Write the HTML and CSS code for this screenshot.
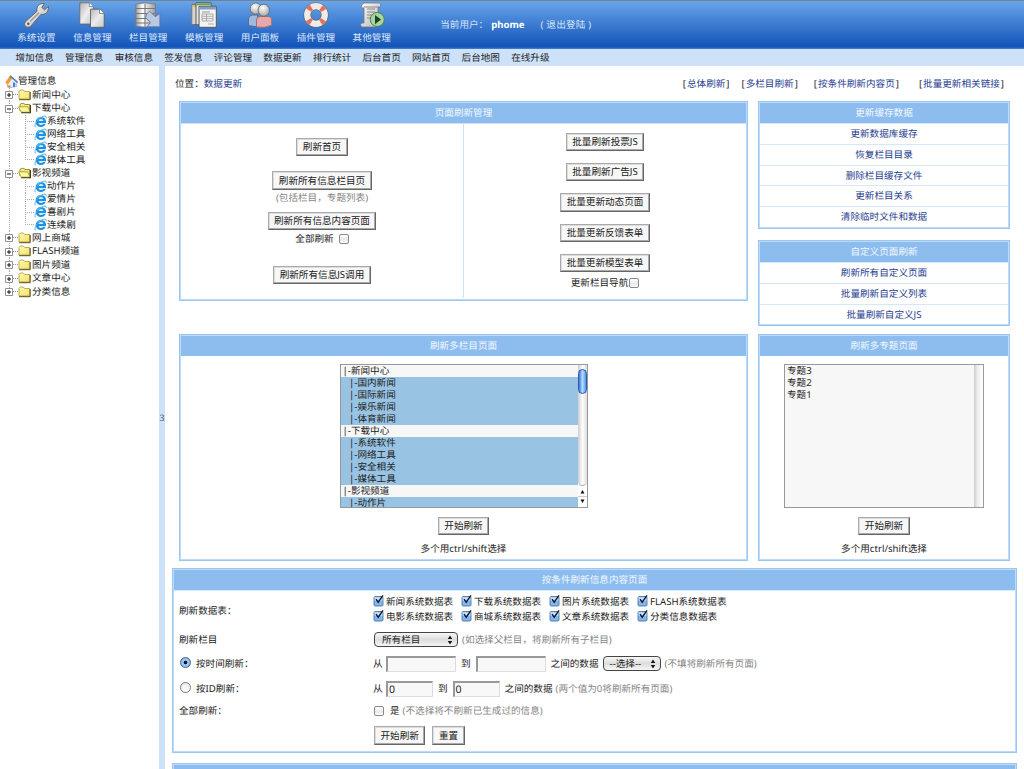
FILE: index.html
```html
<!DOCTYPE html>
<html lang="zh-CN">
<head>
<meta charset="utf-8">
<title>数据更新</title>
<link rel="stylesheet" href="styles.css">
</head>
<body>
<svg class="defs" width="0" height="0">
  <defs>
    <linearGradient id="metal" x1="0" y1="0" x2="1" y2="1"><stop offset="0" stop-color="#fff"/><stop offset="1" stop-color="#b4b4b4"/></linearGradient>
    <linearGradient id="paper" x1="0" y1="0" x2="1" y2="1"><stop offset="0" stop-color="#b5b6b8"/><stop offset=".5" stop-color="#ededed"/><stop offset="1" stop-color="#c4c4c4"/></linearGradient>
    <linearGradient id="cyl" x1="0" x2="1"><stop offset="0" stop-color="#999"/><stop offset=".35" stop-color="#fff"/><stop offset="1" stop-color="#999"/></linearGradient>
    <radialGradient id="head" cx=".4" cy=".3" r=".7"><stop offset="0" stop-color="#fff"/><stop offset="1" stop-color="#aaa"/></radialGradient>
    <linearGradient id="fold" x1="0" y1="0" x2="1" y2="1"><stop offset="0" stop-color="#fffbb8"/><stop offset="1" stop-color="#f5df66"/></linearGradient>
    <symbol id="folder" viewBox="0 0 13 12"><path d="M1 10V2.5L2.3 1h3L6.6 2.5h5V10z" fill="url(#fold)" stroke="#a99a35" stroke-width=".8"/><path d="M1.2 10.7h11V3" fill="none" stroke="#55501c" stroke-width="1"/></symbol>
    <symbol id="open" viewBox="0 0 13 12"><path d="M2 9V2.5L3.2 1.4h2.6l1.2 1.1h4.8V10" fill="#f6e882" stroke="#8e8226" stroke-width=".9"/><path d="M.6 4.8h9l2.4 5.4H3.2z" fill="#fff9a2" stroke="#a59422" stroke-width=".8"/><path d="M3.2 10.8h9.2V3" fill="none" stroke="#39350f" stroke-width="1.1"/></symbol>
    <symbol id="ie" viewBox="0 0 13 13"><circle cx="6.9" cy="6.9" r="5.2" fill="#1f8fe0"/><path d="M4.6 6.1a2.4 2 0 0 1 4.8 0z" fill="#cfeeff"/><path d="M4.5 7.9h7.9v1.2H9.3c-1.2 1.6-4.2 1.3-4.8-1.2z" fill="#cfeeff"/><path d="M2.6 5C4 2.6 6.6 2 8.6 2.8" fill="none" stroke="#6cc9fa" stroke-width="1"/><path d="M1.8 12.2C-.4 11.4 2.1 6.4 5.8 3.4S12.8.2 12.2 3.2" fill="none" stroke="#45aeee" stroke-width="1"/></symbol>
    <symbol id="plus" viewBox="0 0 13 13"><path d="M8 6.5h5" stroke="#999" stroke-dasharray="1 1"/><path d="M.5 3.5h7v7h-7z" fill="#fff" stroke="#909090"/><path d="M2 7h4M4 5v4" stroke="#111" stroke-width="1"/></symbol>
    <symbol id="minus" viewBox="0 0 13 13"><path d="M8 6.5h5" stroke="#999" stroke-dasharray="1 1"/><path d="M.5 3.5h7v7h-7z" fill="#fff" stroke="#909090"/><path d="M2 7h4" stroke="#111" stroke-width="1"/></symbol>
    <symbol id="chk" viewBox="0 0 12 12"><rect x="1" y="1.5" width="9" height="9.5" rx="1.2" fill="#7fb7f2" stroke="#52749e" stroke-width=".9"/><path d="M1.6 2.2h7.8v3.5H1.6z" fill="#c8e0fa"/><path d="M3 4.2 5.2 7.2 10 .4" fill="none" stroke="#10182c" stroke-width="1.4"/></symbol>
    <symbol id="arrows" viewBox="0 0 6 10"><path d="M3 .6 5.2 4H.8zM3 9.4.8 6h4.4z" fill="#111"/></symbol>
  </defs>
</svg>

<header class="top">
  <nav class="tools">
    <a class="tool"><svg viewBox="0 0 26 26"><path d="M2.4 19.8 14 9.2C12.9 4.6 16.6.5 21.6 1.6L18.8 5.5l2.7 2.3 4-3.4c.4 5.4-3 8.6-7.6 8L7.6 24.4c-3.6 2.4-7.8-1-5.2-4.6z" fill="url(#metal)" stroke="#66645c" stroke-width="1"/><circle cx="5.3" cy="21.8" r="1.2" fill="#555"/><path d="M7 19.5 16 10.8" stroke="#999" stroke-width="1.3"/></svg><span>系统设置</span></a>
    <a class="tool"><svg viewBox="0 0 26 26"><path d="M.8.8h9.5l4 3.7v17.5H.8z" fill="url(#paper)" stroke="#666" stroke-width=".8"/><path d="M11.5 7.2h9l4.7 4.3v13.8H11.5z" fill="url(#paper)" stroke="#555" stroke-width=".8"/><path d="M20.5 7.2v4.3h4.7M10.3.8v3.7h4" fill="#fff" stroke="#777" stroke-width=".8"/></svg><span>信息管理</span></a>
    <a class="tool"><svg viewBox="0 0 26 26"><path d="M.8 2Q10 0 20.5 2v22.2Q10 26 .8 24.2z" fill="url(#cyl)" stroke="#777" stroke-width=".8"/><path d="M1 6.5h19M1 11.5h19M1 16.5h19M1 21h19M10 2v23" fill="none" stroke="#777" stroke-width="1"/><path d="m11.5 12 3.2-2.8 5.5 5.5 4.7-3.2v13.3H12l3.5-4.5-5-4.5z" fill="#b9c9e5" stroke="#61789f" stroke-width=".9"/></svg><span>栏目管理</span></a>
    <a class="tool"><svg viewBox="0 0 26 26"><path d="M.8 2.5h15v20H.8z" fill="#d8d6d0" stroke="#777"/><path d="M1.5 3h5v2h-5z" fill="#e2b84e"/><path d="M5 .8h15v22H5z" fill="#e8e8e8" stroke="#555"/><path d="M5.5 1.3h14v2h-14z" fill="#6aa659"/><path d="M8 4.3h17.3v21H8z" fill="#f3f3f3" stroke="#555"/><path d="M8.5 4.8h16.3v2.7H8.5z" fill="#819cc5"/><path d="M11 12h11v7H11zM11 14.3h11M11 16.6h11M15.5 12v7M17 22h6" fill="none" stroke="#aaa"/><path d="M11 10h8" stroke="#999"/></svg><span>模板管理</span></a>
    <a class="tool"><svg viewBox="0 0 26 26"><path d="M1.5 23.5V17q0-4 4-4h5v12z" fill="#9fb9df" stroke="#596c8f"/><path d="M9.5 25v-7q0-3.5 3.8-3.5h7.2q4.2 0 4.2 3.5v5.2q-7 3.3-15.2 1.8z" fill="#e6aaad" stroke="#a36c70"/><circle cx="8.8" cy="6.6" r="5.6" fill="url(#head)" stroke="#666" stroke-width=".8"/><ellipse cx="16.8" cy="8.2" rx="5.6" ry="6" fill="url(#head)" stroke="#666" stroke-width=".8"/></svg><span>用户面板</span></a>
    <a class="tool"><svg viewBox="0 0 26 26"><circle cx="13" cy="13" r="8.8" fill="none" stroke="#666" stroke-width="7.6"/><circle cx="13" cy="13" r="8.8" fill="none" stroke="#ececea" stroke-width="6.2"/><circle cx="13" cy="13" r="8.8" fill="none" stroke="#e0705f" stroke-width="6.2" stroke-dasharray="3.8 10.02" stroke-dashoffset="-5"/></svg><span>插件管理</span></a>
    <a class="tool"><svg viewBox="0 0 26 26"><path d="M5 1h15.5q2.5 1.5.3 4H19v16q0 4-3.5 4h-12Q-.5 23 3 21h2V6H3Q1 3 5 1z" fill="url(#metal)" stroke="#777" stroke-width=".8"/><path d="M8 7h8M8 10h8M8 13h7M8 16h6M5 5h14" stroke="#888"/><circle cx="18.3" cy="17.5" r="7" fill="#a5d79d" stroke="#56774f"/><path d="m16 13 6 4.5-6 4.7z" fill="#184527"/></svg><span>其他管理</span></a>
  </nav>
  <div class="user"><span>当前用户：</span><b>phome</b><span>( 退出登陆 )</span></div>
</header>
<nav class="sub"><a>增加信息</a><a>管理信息</a><a>审核信息</a><a>签发信息</a><a>评论管理</a><a>数据更新</a><a>排行统计</a><a>后台首页</a><a>网站首页</a><a>后台地图</a><a>在线升级</a></nav>

<div class="body">
  <aside class="tree">
    <div class="root"><svg width="13" height="13" viewBox="0 0 13 13"><path d="M2.2 6.5 7 2.4l4.8 4.4v4.6L5.4 12.6 2.2 11z" fill="#e6effb" stroke="#8ba4c8" stroke-width=".7"/><path d="M.2 7.6 5 .5 7.4 3 2.9 9.6z" fill="#f59a30"/><path d="m5 .9 7.6 6.6" stroke="#4b7fc0" stroke-width="1.5"/><path d="M8 7.6h2.2v4.2H8z" fill="#3f7fd0"/><path d="M2.5 10.5h3v2h-3z" fill="#d9823a"/></svg>管理信息</div>
    <div class="node"><svg class="box"><use href="#plus"/></svg><svg class="fd"><use href="#folder"/></svg>新闻中心</div>
    <div class="node"><svg class="box"><use href="#minus"/></svg><svg class="fd"><use href="#open"/></svg>下载中心</div>
    <div class="kids">
      <div class="leaf"><svg class="ie"><use href="#ie"/></svg>系统软件</div>
      <div class="leaf"><svg class="ie"><use href="#ie"/></svg>网络工具</div>
      <div class="leaf"><svg class="ie"><use href="#ie"/></svg>安全相关</div>
      <div class="leaf"><svg class="ie"><use href="#ie"/></svg>媒体工具</div>
    </div>
    <div class="node"><svg class="box"><use href="#minus"/></svg><svg class="fd"><use href="#open"/></svg>影视频道</div>
    <div class="kids">
      <div class="leaf"><svg class="ie"><use href="#ie"/></svg>动作片</div>
      <div class="leaf"><svg class="ie"><use href="#ie"/></svg>爱情片</div>
      <div class="leaf"><svg class="ie"><use href="#ie"/></svg>喜剧片</div>
      <div class="leaf"><svg class="ie"><use href="#ie"/></svg>连续剧</div>
    </div>
    <div class="node"><svg class="box"><use href="#plus"/></svg><svg class="fd"><use href="#folder"/></svg>网上商城</div>
    <div class="node"><svg class="box"><use href="#plus"/></svg><svg class="fd"><use href="#folder"/></svg>FLASH频道</div>
    <div class="node"><svg class="box"><use href="#plus"/></svg><svg class="fd"><use href="#folder"/></svg>图片频道</div>
    <div class="node"><svg class="box"><use href="#plus"/></svg><svg class="fd"><use href="#folder"/></svg>文章中心</div>
    <div class="node last"><svg class="box"><use href="#plus"/></svg><svg class="fd"><use href="#folder"/></svg>分类信息</div>
  </aside>
  <div class="split">3</div>

  <main class="main">
    <div class="crumb"><span>位置：<a>数据更新</a></span><span class="links"><span>[<a>总体刷新</a>]</span><span>[<a>多栏目刷新</a>]</span><span>[<a>按条件刷新内容页</a>]</span><span>[<a>批量更新相关链接</a>]</span></span></div>

    <div class="cols first">
      <section class="panel">
        <h2>页面刷新管理</h2>
        <div class="halves">
          <div class="half left">
            <button>刷新首页</button>
            <button class="b2">刷新所有信息栏目页</button>
            <p class="hint">(包括栏目，专题列表)</p>
            <button class="b3">刷新所有信息内容页面</button>
            <p class="check">全部刷新 <i class="cb"></i></p>
            <button class="b4">刷新所有信息JS调用</button>
          </div>
          <div class="half right">
            <button>批量刷新投票JS</button>
            <button>批量刷新广告JS</button>
            <button>批量更新动态页面</button>
            <button>批量更新反馈表单</button>
            <button>批量更新模型表单</button>
            <p class="check">更新栏目导航<i class="cb"></i></p>
          </div>
        </div>
      </section>
      <div class="side">
        <section class="panel list"><h2>更新缓存数据</h2><a>更新数据库缓存</a><a>恢复栏目目录</a><a>删除栏目缓存文件</a><a>更新栏目关系</a><a>清除临时文件和数据</a></section>
        <section class="panel list"><h2>自定义页面刷新</h2><a>刷新所有自定义页面</a><a>批量刷新自定义列表</a><a>批量刷新自定义JS</a></section>
      </div>
    </div>

    <div class="cols second">
      <section class="panel pick">
        <h2>刷新多栏目页面</h2>
        <div class="listbox wide">
          <div class="opts">
            <div>|-新闻中心</div><div class="on">|-国内新闻</div><div class="on">|-国际新闻</div><div class="on">|-娱乐新闻</div><div class="on">|-体育新闻</div>
            <div>|-下载中心</div><div class="on">|-系统软件</div><div class="on">|-网络工具</div><div class="on">|-安全相关</div><div class="on">|-媒体工具</div>
            <div>|-影视频道</div><div class="on">|-动作片</div>
          </div>
          <div class="bar"><div class="track"><div class="thumb"></div></div><svg width="9" height="21" viewBox="0 0 9 21"><path d="M0 10.5h9" stroke="#ccc"/><path d="m4.5 4 2 3.5h-4zM4.5 17l2-3.5h-4z" fill="#111"/></svg></div>
        </div>
        <button>开始刷新</button>
        <p>多个用ctrl/shift选择</p>
      </section>
      <section class="panel pick">
        <h2>刷新多专题页面</h2>
        <div class="listbox narrow">
          <div class="opts"><div>专题3</div><div>专题2</div><div>专题1</div></div>
          <div class="bar idle"></div>
        </div>
        <button>开始刷新</button>
        <p>多个用ctrl/shift选择</p>
      </section>
    </div>

    <section class="panel form">
      <h2>按条件刷新信息内容页面</h2>
      <div class="row r1"><label>刷新数据表：</label>
        <div class="tables">
          <span><svg><use href="#chk"/></svg>新闻系统数据表</span><span><svg><use href="#chk"/></svg>下载系统数据表</span><span><svg><use href="#chk"/></svg>图片系统数据表</span><span><svg><use href="#chk"/></svg>FLASH系统数据表</span>
          <span><svg><use href="#chk"/></svg>电影系统数据表</span><span><svg><use href="#chk"/></svg>商城系统数据表</span><span><svg><use href="#chk"/></svg>文章系统数据表</span><span><svg><use href="#chk"/></svg>分类信息数据表</span>
        </div></div>
      <div class="row r2"><label>刷新栏目</label><div class="val"><span class="sel all">所有栏目<svg><use href="#arrows"/></svg></span><span class="hint">(如选择父栏目，将刷新所有子栏目)</span></div></div>
      <div class="row r3"><label><i class="rad on"></i>按时间刷新：</label><div class="val"><span class="from">从</span><span class="inp"></span><span class="to">到</span><span class="inp"></span><span class="rest">之间的数据</span><span class="sel few">--选择--<svg><use href="#arrows"/></svg></span><span class="hint">(不填将刷新所有页面)</span></div></div>
      <div class="row r4"><label><i class="rad"></i>按ID刷新：</label><div class="val"><span class="from">从</span><span class="inp short">0</span><span class="to">到</span><span class="inp short">0</span><span class="rest">之间的数据</span><span class="hint tight">(两个值为0将刷新所有页面)</span></div></div>
      <div class="row r5"><label>全部刷新：</label><div class="val"><i class="cb"></i><span class="yes">是</span><span class="hint tight">(不选择将不刷新已生成过的信息)</span></div></div>
      <div class="row r6"><label></label><div class="val"><button>开始刷新</button><button class="reset">重置</button></div></div>
    </section>
    <section class="panel next"></section>
  </main>
</div>
</body>
</html>
```
FILE: styles.css
```css
* { box-sizing: border-box; }
body { margin: 0; width: 1024px; height: 769px; overflow: hidden; background: #fff; color: #222; font: 9.6px/12px "Noto Sans", "Noto Sans CJK SC", sans-serif; white-space: nowrap; text-rendering: geometricPrecision; }
p, h2 { margin: 0; font-size: 9.6px; font-weight: 400; }
a { color: #27408f; }
.defs { display: block; position: absolute; }

.top { height: 49px; display: flex; border-top: 1px solid #6f8396; background: linear-gradient(#68a5e9, #1253b9 46px, #4a86d6 48px); }
.tools { display: flex; padding-left: 8.5px; }
.tool { width: 55.9px; display: flex; flex-direction: column; align-items: center; color: #dce9fb; padding-top: 1px; }
.tool svg { width: 26px; height: 26px; }
.tool span { margin-top: 3.5px; }
.user { margin-left: 40.5px; padding-top: 18px; color: #d5e5fa; display: flex; }
.user b { color: #fff; margin: 0 16px 0 3px; font-size: 9.6px; }
.user span:last-child { letter-spacing: .2px; }
.sub { height: 17px; display: flex; gap: 11.2px; padding: 3px 0 0 15.5px; background: #cde1f8; }
.sub a { color: #222; }

.body { display: flex; height: 703px; }
.tree { width: 159px; padding: 8px 0 0 5px; }
.root { display: flex; align-items: center; height: 14px; }
.node, .leaf { display: flex; align-items: center; }
.node { height: 13.4px; }
.node, .kids { background: repeating-linear-gradient(#aaa 0 1px, transparent 1px 2px) 4px 0 / 1px 100% no-repeat; }
.node.last { background-size: 1px 50%; }
.box { width: 13px; height: 13px; flex: none; }
.fd { width: 13px; height: 12px; flex: none; margin-right: 1px; }
.kids { padding-left: 20px; }
.leaf { height: 12.9px; padding-left: 9px; background: repeating-linear-gradient(#aaa 0 1px, transparent 1px 2px) 0 0 / 1px 100% no-repeat, repeating-linear-gradient(90deg, #aaa 0 1px, transparent 1px 2px) 0 6px / 9px 1px no-repeat; }
.leaf:last-child { background-size: 1px 50%, 9px 1px; }
.ie { width: 13px; height: 13px; flex: none; }
.split { width: 6px; background: #cde1fa; color: #566; display: flex; align-items: center; justify-content: center; font-size: 9px; }

.main { flex: 1; }
.crumb { display: flex; justify-content: space-between; padding: 12px 20px 0 10px; height: 35px; }
.links { display: flex; gap: 12px; }
.links a { padding: 0 1px; }
.links span:nth-child(n+3) { margin-left: 4px; }
.links span:nth-child(4) { margin-left: 8px; }

.cols { display: grid; grid-template-columns: 569px 252px; column-gap: 10px; padding-left: 14px; }
.first { height: 233px; align-items: start; }
.second { height: 227px; }
.side { display: grid; row-gap: 11px; }
.panel { border: 1px solid #9ac7f1; box-shadow: inset 0 0 0 1px #bddaf8; padding: 1px; text-align: center; }
.panel h2 { height: 20px; line-height: 20px; background: #8dbcef; color: #f2f8ff; }
.first > .panel { height: 200px; }
.halves { display: flex; height: 175px; }
.half { display: flex; flex-direction: column; align-items: center; border-top: 1px solid #cde1fa; }
.left { width: 283px; border-right: 1px solid #cde1fa; padding-top: 14px; }
.right { flex: 1; padding-top: 9px; gap: 12px; }
.right .check { margin-top: -7px; }
button { height: 18.2px; padding: 0 5.5px; font: inherit; line-height: 14px; color: #222; background: #f7f7f7; border: 1px solid; border-color: #aaa #666 #666 #aaa; box-shadow: inset -1px -1px #aaa, inset 1px 1px #ddd; border-radius: 0; text-align: center; }
.b2 { margin-top: 15.3px; }
.left .hint { margin: 2px 0 8px; }
.b3 { margin: 0; }
.check { display: flex; align-items: center; height: 12px; margin-top: 3px; }
.left .check { margin-bottom: 21px; gap: 4px; }
.check .cb { margin-left: 1px; }
.hint { color: #858585; }
.cb { display: block; width: 10px; height: 10px; border: 1px solid #888; border-radius: 2px; background: linear-gradient(#fff, #e9e9e9 60%, #fff); }

.list a { display: block; height: 20.8px; line-height: 19px; border-top: 1px solid #d5e7fb; }

.pick { display: flex; flex-direction: column; align-items: center; }
.pick h2 { align-self: stretch; flex: none; }
.pick button { margin: 9px 0 8px; }
.listbox { margin-top: 8px; height: 144px; flex: none; border: 1px solid #999; background: #f7f7f7; display: flex; text-align: left; }
.wide { width: 248px; }
.narrow { width: 200px; }
.opts { flex: 1; overflow: hidden; }
.opts div { height: 12px; line-height: 12px; padding-left: 2px; }
.opts .on { background: #98c3e3; padding-left: 8.5px; }
.bar { width: 9px; display: flex; flex-direction: column; background: #fff; }
.track { flex: 1; padding-top: 4px; border-radius: 0 0 5px 5px; border-bottom: 1px solid #aaa; background: linear-gradient(90deg, #ccc, #fff 50%, #ddd); }
.thumb { height: 25px; border: 1px solid #2e56b5; border-radius: 5px; background: linear-gradient(90deg, #3a78dc, #b5dcff 50%, #4d97ec); }
.bar.idle { background: linear-gradient(90deg, #ccc, #eee 40%, #fff); }

.form { margin: 7px 7px 0 7px; height: 185px; text-align: left; }
.form h2 { text-align: center; }
.row { display: flex; align-items: center; }
.row label { width: 200px; padding-left: 5px; display: flex; align-items: center; }
.r1 { height: 40px; border-top: 1px solid #dcebfb; }
.r2 { height: 19px; }
.r3 { height: 29.5px; }
.r4 { height: 20px; }
.r5 { height: 25px; }
.r6 { height: 24px; }
.tables { display: grid; grid-template-columns: repeat(4, 88px); grid-auto-rows: 14.4px; margin-bottom: 2px; }
.tables span { display: flex; align-items: center; }
.tables svg { width: 12px; height: 12px; margin: -2px 1px 0 -1px; flex: none; }
.val { display: flex; align-items: center; }
.sel { display: flex; align-items: center; justify-content: space-between; height: 15px; border: 1px solid #444; border-radius: 4px; background: linear-gradient(#f8f8f8, #ddd 50%, #f5f5f5); padding: 0 4px 0 7px; }
.sel svg { width: 6px; height: 10px; }
.all { width: 84px; }
.few { width: 58px; margin-left: 4px; padding-left: 6px; }
.sel + .hint { margin-left: 4px; }
.from { width: 12px; margin-left: -1px; }
.inp { width: 70px; height: 16px; margin-left: 1px; padding-left: 1px; font-size: 10.5px; line-height: 14px; background: #f8f8f8; border: solid; border-width: 2px 1px 1px 2px; border-color: #999 #ddd #ddd #999; }
.short { width: 47px; }
.to { margin: 0 4px 0 5px; }
.rest { margin-left: 5px; }
.tight { margin-left: 3px; }
.rad { width: 11px; height: 11px; margin: -2px 5px 0 1px; border: 1px solid #777; border-radius: 50%; background: linear-gradient(#eee, #fff); }
.rad.on { border-color: #44618e; background: radial-gradient(circle, #112 0 1.5px, #9bcbf8 2.2px, #70adf0); }
.r5 .cb { margin-right: 6px; }
.reset { margin-left: 7px; }
.next { margin: 10px 7px 0; height: 20px; background: #8dbcef; }
```
